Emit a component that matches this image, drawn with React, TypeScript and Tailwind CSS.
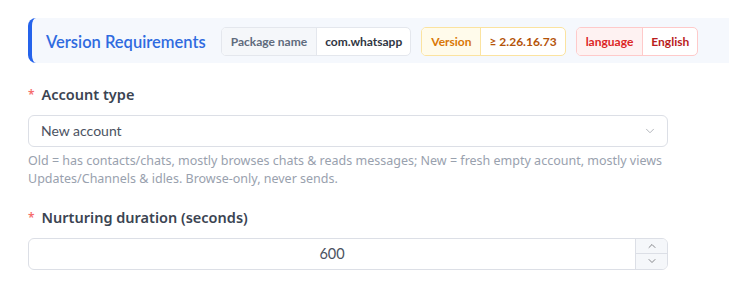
import { ChevronDown, ChevronUp } from "lucide-react";

function Tag({
  label,
  value,
  tone,
}: {
  label: string;
  value: string;
  tone: "gray" | "amber" | "red";
}) {
  const styles = {
    gray: {
      wrap: "border-[#e4e7ed]",
      label: "bg-[#f5f7fa] text-[#606b7d]",
      divider: "border-[#e4e7ed]",
      value: "text-[#303642]",
    },
    amber: {
      wrap: "border-[#fbe3a0]",
      label: "bg-[#fffbeb] text-[#d97706]",
      divider: "border-[#fbe3a0]",
      value: "text-[#b45309]",
    },
    red: {
      wrap: "border-[#fecaca]",
      label: "bg-[#fef2f2] text-[#dc2626]",
      divider: "border-[#fecaca]",
      value: "text-[#b91c1c]",
    },
  }[tone];

  return (
    <div className={`flex h-[29px] shrink-0 overflow-hidden whitespace-nowrap rounded-[5px] border bg-white font-['Lato',sans-serif] text-[12px] font-bold ${styles.wrap}`}>
      <span className={`flex items-center px-[9px] ${styles.label}`}>{label}</span>
      <span className={`flex items-center border-l px-[8px] ${styles.divider} ${styles.value}`}>{value}</span>
    </div>
  );
}

export default function App() {
  return (
    <div className="h-[293px] w-[729px] overflow-hidden bg-white pl-[28px] pt-[18px] font-['Noto_Sans',sans-serif]">
      {/* Header */}
      <div className="flex h-[45px] items-center gap-[10px] whitespace-nowrap rounded-l-lg border-l-4 border-[#2563eb] bg-[#f5f8fd] pl-[14px] pt-[2px]">
        <h2 className="mr-[5px] mt-[2px] shrink-0 font-['Lato',sans-serif] text-[16.5px] font-semibold text-[#2f6be0]">
          Version Requirements
        </h2>
        <Tag label="Package name" value="com.whatsapp" tone="gray" />
        <Tag label="Version" value="≥ 2.26.16.73" tone="amber" />
        <Tag label="language" value="English" tone="red" />
      </div>

      {/* Form */}
      <div className="w-[640px] pt-[21px]">
        <label className="flex items-center gap-[7px] text-[14.5px] font-semibold text-[#3b4452]">
          <span className="text-[12px] text-[#f56c6c]">*</span>
          Account type
        </label>
        <div className="mt-[9px] flex h-[32px] items-center justify-between rounded-[6px] border border-[#dcdfe6] bg-white pl-[12px] pr-[10px]">
          <span className="font-['Lato',sans-serif] text-[14px] text-[#4b5261]">New account</span>
          <ChevronDown className="h-[14px] w-[14px] text-[#a8abb2]" strokeWidth={1.5} />
        </div>
        <p className="mt-[5px] text-[12.5px] leading-[18px] text-[#99a1ae]">
          Old = has contacts/chats, mostly browses chats &amp; reads messages; New = fresh empty account, mostly views
          Updates/Channels &amp; idles. Browse-only, never sends.
        </p>

        <label className="mt-[19px] flex items-center gap-[7px] text-[14.5px] font-semibold text-[#3b4452]">
          <span className="text-[12px] text-[#f56c6c]">*</span>
          Nurturing duration (seconds)
        </label>
        <div className="mt-[9px] flex h-[32px] overflow-hidden rounded-[6px] border border-[#dcdfe6] bg-white">
          <div className="flex flex-1 items-center justify-center font-['Lato',sans-serif] text-[14.5px] text-[#4b5261]">
            600
          </div>
          <div className="flex w-[32px] flex-col border-l border-[#dcdfe6] bg-[#f5f7fa]">
            <div className="flex flex-1 items-center justify-center border-b border-[#dcdfe6]">
              <ChevronUp className="h-[12px] w-[12px] text-[#606266]" strokeWidth={1.5} />
            </div>
            <div className="flex flex-1 items-center justify-center">
              <ChevronDown className="h-[12px] w-[12px] text-[#606266]" strokeWidth={1.5} />
            </div>
          </div>
        </div>
      </div>
    </div>
  );
}
